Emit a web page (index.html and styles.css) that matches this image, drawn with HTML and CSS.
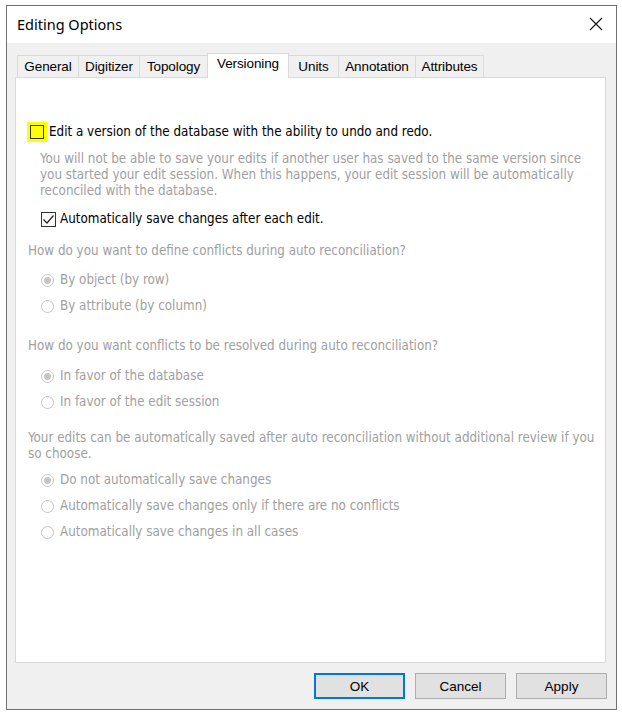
FILE: index.html
```html
<!DOCTYPE html>
<html>
<head>
<meta charset="utf-8">
<link rel="stylesheet" href="styles.css">
</head>
<body>
<div class="window">
  <div class="titlebar">
    <span class="title">Editing Options</span>
    <svg class="close" width="14" height="14" viewBox="0 0 14 14"><path d="M1 1 L13 13 M13 1 L1 13" stroke="#111" stroke-width="1.1" fill="none"/></svg>
  </div>
  <div class="body">
    <div class="tabs">
      <div class="tab t-general">General</div>
      <div class="tab t-digitizer">Digitizer</div>
      <div class="tab t-topology">Topology</div>
      <div class="tab t-versioning active">Versioning</div>
      <div class="tab t-units">Units</div>
      <div class="tab t-annotation">Annotation</div>
      <div class="tab t-attributes">Attributes</div>
    </div>
    <div class="panel">
      <div class="row-main">
        <span class="hl"><span class="box"></span></span>
        <span class="label">Edit a version of the database with the ability to undo and redo.</span>
      </div>
      <div class="note">You will not be able to save your edits if another user has saved to the same version since<br>you started your edit session. When this happens, your edit session will be automatically<br>reconciled with the database.</div>
      <div class="row-check">
        <span class="box checked"><svg width="13" height="13" viewBox="0 0 13 13"><path d="M1.5 6.5 L5 10 L11.5 2.5" stroke="#222" stroke-width="1.2" fill="none"/></svg></span>
        <span class="label">Automatically save changes after each edit.</span>
      </div>
      <div class="question q1">How do you want to define conflicts during auto reconciliation?</div>
      <div class="radio first"><span class="dot on"></span><span>By object (by row)</span></div>
      <div class="radio"><span class="dot"></span><span>By attribute (by column)</span></div>
      <div class="question q2">How do you want conflicts to be resolved during auto reconciliation?</div>
      <div class="radio first"><span class="dot on"></span><span>In favor of the database</span></div>
      <div class="radio"><span class="dot"></span><span>In favor of the edit session</span></div>
      <div class="question q3">Your edits can be automatically saved after auto reconciliation without additional review if you<br>so choose.</div>
      <div class="radio"><span class="dot on"></span><span>Do not automatically save changes</span></div>
      <div class="radio"><span class="dot"></span><span>Automatically save changes only if there are no conflicts</span></div>
      <div class="radio"><span class="dot"></span><span>Automatically save changes in all cases</span></div>
    </div>
    <div class="buttons">
      <button class="btn default">OK</button>
      <button class="btn">Cancel</button>
      <button class="btn">Apply</button>
    </div>
  </div>
</div>
</body>
</html>
```
FILE: styles.css
```css
html, body {
  margin: 0;
  padding: 0;
  background: #ffffff;
}
body {
  font-family: "DejaVu Sans Condensed", "DejaVu Sans", sans-serif;
  font-size: 13.3px;
}
.window {
  box-sizing: border-box;
  margin: 5px 0 0 6px;
  width: 611px;
  height: 705px;
  border: 1px solid #707070;
  display: flex;
  flex-direction: column;
  background: #f0f0f0;
}
.titlebar {
  height: 37px;
  background: #ffffff;
  display: flex;
  align-items: center;
  justify-content: space-between;
  padding: 0 13px 0 10px;
  flex-shrink: 0;
}
.title {
  font-family: "Noto Sans", "Open Sans", sans-serif;
  font-size: 14.5px;
  color: #000;
  margin-top: -1px;
}
.close {
  display: block;
  margin-top: -2px;
}
.body {
  flex: 1;
  display: flex;
  flex-direction: column;
  padding: 10px 10px 10px 8px;
  min-height: 0;
}
.tabs {
  display: flex;
  align-items: flex-end;
  padding-left: 2px;
  position: relative;
  z-index: 1;
}
.tab {
  box-sizing: border-box;
  height: 22px;
  border: 1px solid #d9d9d9;
  border-bottom: none;
  margin-right: -1px;
  background: #f0f0f0;
  font-family: "Liberation Sans", Arial, sans-serif;
  font-size: 13.5px;
  line-height: 21px;
  color: #000;
  text-align: center;
  letter-spacing: -0.1px;
}
.t-general { width: 62px; }
.t-digitizer { width: 62px; }
.t-topology { width: 69px; }
.t-versioning { width: 82px; }
.t-units { width: 51px; }
.t-annotation { width: 78px; }
.t-attributes { width: 69px; }
.tab.active {
  height: 25px;
  background: #ffffff;
  margin-bottom: -1px;
  line-height: 20px;
}
.panel {
  flex: 1;
  background: #ffffff;
  border: 1px solid #d9d9d9;
  padding: 44px 0 0 12px;
  display: flex;
  flex-direction: column;
  align-items: flex-start;
  white-space: nowrap;
}
.row-main {
  display: flex;
  align-items: center;
  height: 20px;
  margin-left: -1px;
  color: #000;
}
.hl {
  box-sizing: border-box;
  width: 20px;
  height: 20px;
  background: #ffff00;
  padding: 3px 0 0 3px;
  margin-right: 2px;
}
.hl .box {
  width: 14px;
  height: 14px;
  border-color: #333;
  background: #ffff00;
}
.box {
  box-sizing: border-box;
  display: block;
  width: 15px;
  height: 15px;
  border: 1px solid #333;
  background: #fff;
  position: relative;
}
.box svg {
  position: absolute;
  left: 0;
  top: 0;
}
.label {
  line-height: 16px;
}
.note {
  margin: 9px 0 0 12px;
  line-height: 16px;
  color: #a0a0a0;
}
.row-check {
  display: flex;
  align-items: center;
  height: 16px;
  margin: 12px 0 0 13px;
  color: #000;
}
.row-check .box {
  margin-right: 4px;
}
.question {
  line-height: 16px;
  color: #a0a0a0;
}
.q1 { margin-top: 16px; }
.q2 { margin-top: 24px; }
.q3 { margin-top: 20px; }
.radio {
  display: flex;
  align-items: center;
  height: 16px;
  line-height: 16px;
  margin: 10px 0 0 13px;
  color: #a0a0a0;
}
.radio.first { margin-top: 13px; }
.q2 + .radio.first { margin-top: 14px; }
.dot {
  box-sizing: border-box;
  width: 13px;
  height: 13px;
  border: 1px solid #c4c4c4;
  border-radius: 50%;
  margin-right: 6px;
  position: relative;
  background: #fff;
}
.dot.on::after {
  content: "";
  position: absolute;
  left: 2px;
  top: 2px;
  width: 7px;
  height: 7px;
  border-radius: 50%;
  background: #c4c4c4;
}
.buttons {
  display: flex;
  justify-content: flex-end;
  gap: 10px;
  margin-top: 10px;
  margin-right: -1px;
  flex-shrink: 0;
}
.btn {
  box-sizing: border-box;
  width: 91px;
  height: 26px;
  background: #e1e1e1;
  border: 1px solid #adadad;
  font-family: "Liberation Sans", Arial, sans-serif;
  font-size: 13.5px;
  color: #000;
  padding: 0;
  margin: 0;
}
.btn.default {
  border: 2px solid #0078d7;
}
```
